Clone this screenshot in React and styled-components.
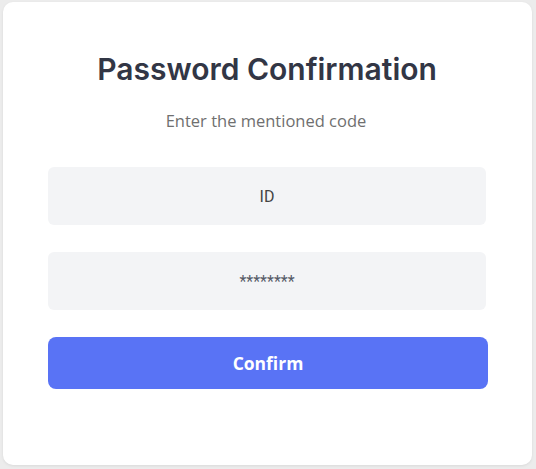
import styled, { createGlobalStyle } from 'styled-components';

const GlobalStyle = createGlobalStyle`
    * { box-sizing: border-box; }
    body {
        margin: 0;
        background-color: #ececec;
        font-family: "Open Sans", "Liberation Sans", sans-serif;
    }
`;

const Page = styled.div`
    height: 469px;
    padding: 2px 4px 4px 3px;
`;

const Card = styled.div`
    height: 463px;
    background-color: #ffffff;
    border-radius: 10px;
    box-shadow: 0 1px 3px rgba(0, 0, 0, 0.08);
    padding: 47px 48px 0 45px;
    display: flex;
    flex-direction: column;
    align-items: center;
`;

const Title = styled.h1`
    margin: 0;
    font-family: Inter, "Noto Sans", sans-serif;
    font-size: 30px;
    font-weight: 600;
    line-height: 40px;
    color: #323645;
    letter-spacing: 0;
    transform: translateX(1px);
`;

const Subtitle = styled.p`
    margin: 22px 0 0;
    font-family: "Open Sans", "Liberation Sans", sans-serif;
    font-size: 16.5px;
    line-height: 20px;
    color: #6f6f6f;
`;

const Form = styled.form`
    width: 100%;
    margin-top: 36px;
    display: flex;
    flex-direction: column;
    gap: 27px;
`;

const Input = styled.input`
    width: 438px;
    height: 58px;
    margin: 0 auto;
    border: none;
    border-radius: 6px;
    background-color: #f3f4f6;
    text-align: center;
    font-family: Roboto, "Liberation Sans", sans-serif;
    font-size: 16px;
    color: #444;

    &:focus {
        outline: none;
    }

    &::placeholder {
        color: ${(p) => (p.$dark ? '#555a66' : '#444')};
    }
`;

const Button = styled.button`
    width: 440px;
    height: 52px;
    margin: 0 auto;
    border: none;
    border-radius: 8px;
    background-color: #5973f5;
    color: #ffffff;
    font-family: "Open Sans", "Liberation Sans", sans-serif;
    font-size: 17.5px;
    font-weight: 700;
    cursor: pointer;
`;

const App = () => {
    return (
        <Page>
            <GlobalStyle />
            <Card>
                <Title>Password Confirmation</Title>
                <Subtitle>Enter the mentioned code</Subtitle>
                <Form onSubmit={(e) => e.preventDefault()}>
                    <Input placeholder='ID' />
                    <Input placeholder='********' $dark />
                    <Button type='submit'>Confirm</Button>
                </Form>
            </Card>
        </Page>
    );
};

export default App;
